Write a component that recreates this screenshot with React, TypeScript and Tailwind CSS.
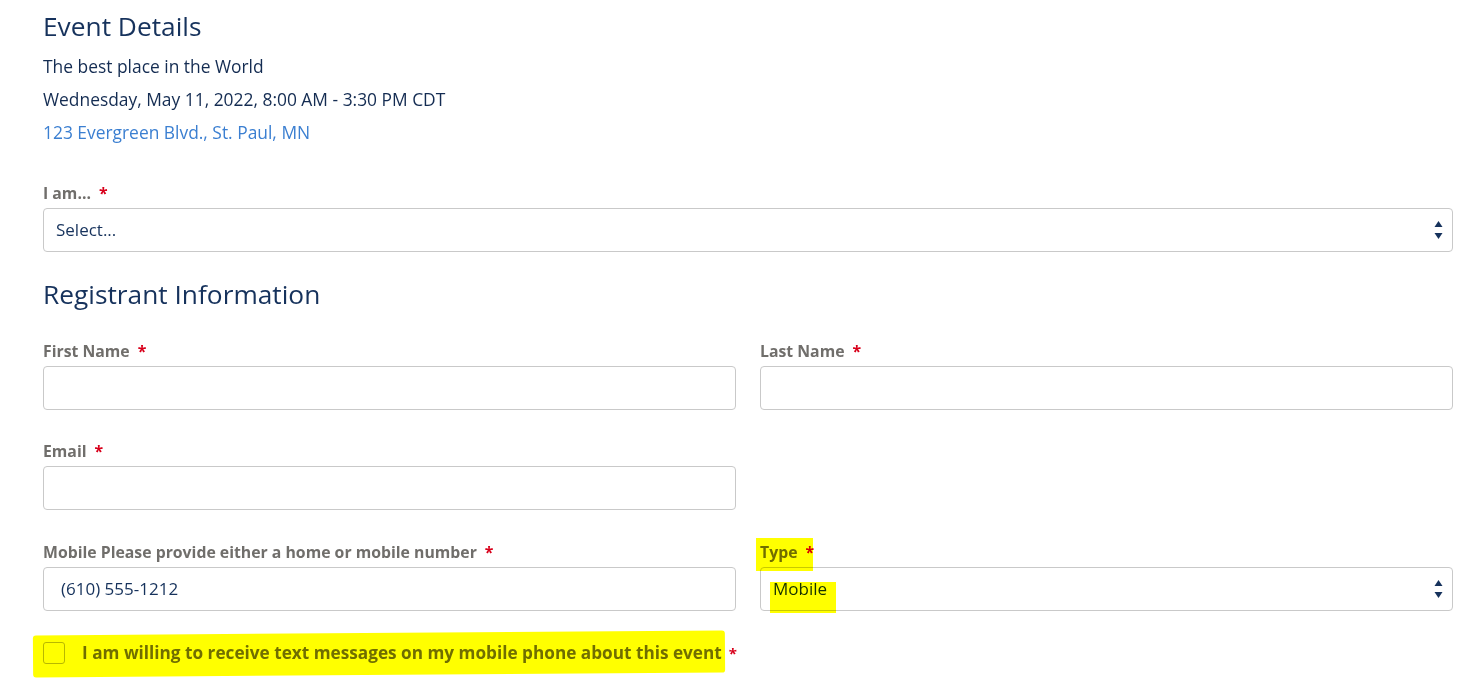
function Req() {
  return <span className="ml-[8px] text-[#d8001b]">*</span>;
}

function Label({ children }: { children: React.ReactNode }) {
  return (
    <div className="mb-[5px] h-[20px] text-[15.8px] font-bold leading-[20px] text-[#706e6b]">
      {children}
      <Req />
    </div>
  );
}

function Arrows() {
  return (
    <svg width="9" height="22" viewBox="0 0 9 22" className="shrink-0">
      <path d="M4.5 2 L8.5 8 L0.5 8 Z" fill="#16325c" />
      <path d="M0.5 14 L8.5 14 L4.5 20 Z" fill="#16325c" />
    </svg>
  );
}

function Box({ children, select }: { children?: React.ReactNode; select?: boolean }) {
  return (
    <div className="flex h-[44px] items-center rounded-[4px] border border-[#c9c9c9] bg-white pl-[12px] pr-[9px] text-[17px] text-[#16325c]">
      <div className="flex-1">{children}</div>
      {select && <Arrows />}
    </div>
  );
}

// highlighter marks drawn on top, multiplied into what is under them
function Mark({ className }: { className: string }) {
  return <span className={`pointer-events-none absolute bg-[#ffff00] mix-blend-multiply ${className}`} />;
}

export default function App() {
  return (
    <div
      className="min-h-[697px] bg-white pl-[43px] pr-[23px] pt-[8px]"
      style={{ fontFamily: '"Open Sans", "Noto Sans", sans-serif' }}
    >
      {/* Event details */}
      <h2 className="text-[26.3px] leading-[36px] text-[#16325c]">Event Details</h2>
      <div className="mt-[6px] text-[17.4px] leading-[33px] text-[#142c52]">
        <div>The best place in the World</div>
        <div>Wednesday, May 11, 2022, 8:00 AM - 3:30 PM CDT</div>
        <div className="text-[#3b7fd1]">123 Evergreen Blvd., St. Paul, MN</div>
      </div>

      <div className="mt-[34px]">
        <Label>I am...</Label>
        <Box select>Select...</Box>
      </div>

      {/* Registrant */}
      <h2 className="mt-[24px] text-[26.3px] leading-[36px] text-[#16325c]">Registrant Information</h2>

      <div className="mt-[29px] grid grid-cols-2 gap-x-[24px]">
        <div>
          <Label>First Name</Label>
          <Box />
        </div>
        <div>
          <Label>Last Name</Label>
          <Box />
        </div>
      </div>

      <div className="mt-[31px] grid grid-cols-2 gap-x-[24px]">
        <div>
          <Label>Email</Label>
          <Box />
        </div>
      </div>

      <div className="mt-[32px] grid grid-cols-2 gap-x-[24px]">
        <div>
          <Label>Mobile Please provide either a home or mobile number</Label>
          <Box>
            <span className="pl-[5px]">(610) 555-1212</span>
          </Box>
        </div>
        <div className="relative">
          <Label>Type</Label>
          <Box select>Mobile</Box>
          <Mark className="-left-[4px] -top-[4px] h-[33px] w-[57px]" />
          <Mark className="left-[10px] top-[40px] h-[31px] w-[66px]" />
        </div>
      </div>

      {/* Consent */}
      <div className="relative mt-[21px] flex h-[42px] items-center">
        <span className="h-[22px] w-[22px] rounded-[3px] border border-[#b8b8b8] bg-white" />
        <span className="ml-[17px] text-[17.2px] font-bold text-[#706e6b]">
          I am willing to receive text messages on my mobile phone about this event
        </span>
        <span className="ml-[7px] text-[15px] font-bold text-[#d8001b]">*</span>
        <Mark className="-left-[10px] top-[1px] h-[42px] w-[692px] rounded-[3px] -rotate-[0.4deg]" />
      </div>
    </div>
  );
}
